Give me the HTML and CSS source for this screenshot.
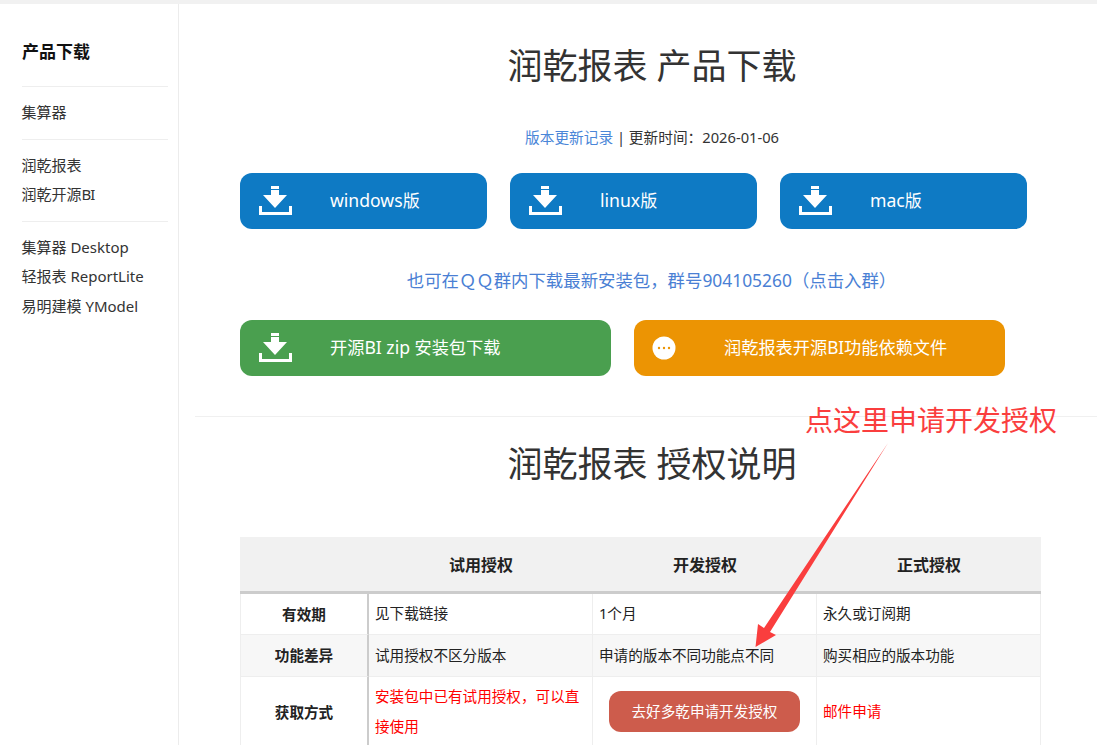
FILE: index.html
```html
<!DOCTYPE html>
<html lang="zh-CN">
<head>
<meta charset="utf-8">
<title>润乾报表 产品下载</title>
<link rel="stylesheet" href="styles.css">
</head>
<body>
<div class="page">
  <aside class="sidebar">
    <div class="side-title">产品下载</div>
    <div class="side-group"><a>集算器</a></div>
    <div class="side-group"><a>润乾报表</a><a>润乾开源<span class="bi">BI</span></a></div>
    <div class="side-group"><a>集算器 Desktop</a><a>轻报表 ReportLite</a><a>易明建模 YModel</a></div>
  </aside>
  <main class="main">
    <h1 class="heading first">润乾报表 产品下载</h1>
    <p class="update"><a class="link">版本更新记录</a> | 更新时间：2026-01-06</p>
    <div class="btn-row">
      <a class="btn blue small">
        <svg class="dl" viewBox="0 0 34 30"><path d="M12 0h8v3h-8zM12 4h8v5h-8zM4 9h24L16 22z" fill="#fff"/><path d="M1.5 20v7.5h30V20" fill="none" stroke="#fff" stroke-width="3"/></svg>
        <span><span class="lat">windows</span>版</span>
      </a>
      <a class="btn blue small">
        <svg class="dl" viewBox="0 0 34 30"><path d="M12 0h8v3h-8zM12 4h8v5h-8zM4 9h24L16 22z" fill="#fff"/><path d="M1.5 20v7.5h30V20" fill="none" stroke="#fff" stroke-width="3"/></svg>
        <span><span class="lat">linux</span>版</span>
      </a>
      <a class="btn blue small">
        <svg class="dl" viewBox="0 0 34 30"><path d="M12 0h8v3h-8zM12 4h8v5h-8zM4 9h24L16 22z" fill="#fff"/><path d="M1.5 20v7.5h30V20" fill="none" stroke="#fff" stroke-width="3"/></svg>
        <span><span class="lat">mac</span>版</span>
      </a>
    </div>
    <p class="qq">也可在ＱＱ群内下载最新安装包，群号904105260（点击入群）</p>
    <div class="btn-row">
      <a class="btn green wide">
        <svg class="dl" viewBox="0 0 34 30"><path d="M12 0h8v3h-8zM12 4h8v5h-8zM4 9h24L16 22z" fill="#fff"/><path d="M1.5 20v7.5h30V20" fill="none" stroke="#fff" stroke-width="3"/></svg>
        <span>开源<span class="lat">BI zip</span> 安装包下载</span>
      </a>
      <a class="btn orange wide">
        <svg class="more" viewBox="0 0 24 24"><circle cx="12" cy="12" r="11.5" fill="#fff"/><circle cx="7" cy="12" r="1.2" fill="#ec9403"/><circle cx="12" cy="12" r="1.2" fill="#ec9403"/><circle cx="17" cy="12" r="1.2" fill="#ec9403"/></svg>
        <span>润乾报表开源BI功能依赖文件</span>
      </a>
    </div>
    <hr class="rule">
    <h1 class="heading second">润乾报表 授权说明</h1>
    <table class="license">
      <thead>
        <tr><th class="c1"></th><th class="c2">试用授权</th><th class="c3">开发授权</th><th class="c4">正式授权</th></tr>
      </thead>
      <tbody>
        <tr class="r1"><th>有效期</th><td>见下载链接</td><td>1个月</td><td>永久或订阅期</td></tr>
        <tr class="r2"><th>功能差异</th><td>试用授权不区分版本</td><td>申请的版本不同功能点不同</td><td>购买相应的版本功能</td></tr>
        <tr class="r3"><th>获取方式</th><td class="red">安装包中已有试用授权，可以直接使用</td><td><a class="apply">去好多乾申请开发授权</a></td><td class="red">邮件申请</td></tr>
      </tbody>
    </table>
  </main>
</div>
<div class="note">点这里申请开发授权</div>
<svg class="arrow" viewBox="0 0 1097 745"><path d="M888 443 770 632l6 3-20.500 12 2.500-23 6 4z" fill="#fa3e3e"/></svg>
</body>
</html>
```

FILE: styles.css
```css
* { box-sizing: border-box; }
html, body { margin: 0; height: 100%; overflow: hidden; background: #fff; }
body {
  font-family: "Noto Sans", "Noto Sans CJK SC", sans-serif;
  color: #333;
  font-size: 15px;
  border-top: 4px solid #f1f1f1;
  position: relative;
}
.page { display: flex; height: 741px; overflow: hidden; }
.sidebar {
  width: 179px;
  flex: none;
  padding: 0 10px 0 22px;
  border-right: 1px solid #ececec;
}
.side-title {
  font-size: 17px;
  font-weight: 700;
  color: #111;
  line-height: 22px;
  padding-top: 37px;
  padding-bottom: 23px;
}
.side-group {
  border-top: 1px solid #eee;
  padding: 11px 0;
  display: flex;
  flex-direction: column;
}
.side-group a { line-height: 29.500px; font-size: 15px; color: #333; margin-left: -0.500px; }
.bi { letter-spacing: -1px; }
.main { flex: 1; padding-left: 28px; min-width: 0; }
.heading {
  font-size: 35px;
  font-weight: 400;
  line-height: 48px;
  margin: 0;
  text-align: center;
  color: #333;
}
.first { padding-top: 38px; }
.update { margin: 37px 0 0; height: 24px; line-height: 21px; text-align: center; font-size: 14.700px; color: #333; }
.link { color: #4a86d8; }
.btn-row { display: flex; gap: 23px; margin-left: 33px; }
.update + .btn-row { margin-top: 22px; }
.btn {
  height: 56px;
  border-radius: 12px;
  display: flex;
  align-items: center;
  color: #fff;
  font-size: 17px;
  position: relative;
  padding-left: 90px;
  padding-bottom: 4px;
}
.lat { font-size: 17.600px; }
.small { width: 247px; }
.wide { width: 371px; font-size: 17.200px; }
.blue { background: #0e7ac4; }
.green { background: #4a9f4f; }
.orange { background: #ec9403; }
.dl { position: absolute; left: 19px; top: 13px; width: 34px; height: 30px; }
.more { position: absolute; left: 18px; top: 16px; width: 24px; height: 24px; }
.qq { margin: 36px 0 25px -1px; height: 30px; line-height: 30px; text-align: center; font-size: 17.400px; color: #4a7fd4; }
.rule { border: 0; border-top: 1px solid #f0f0f0; margin: 40px 0 0 -12px; }
.second { padding-top: 23px; }
.license {
  margin: 49px 0 0 33px;
  width: 801px;
  border-collapse: separate;
  border-spacing: 0;
  table-layout: fixed;
  font-size: 14.600px;
  color: #222;
}
.license thead th {
  height: 57px;
  background: #f1f1f1;
  border-bottom: 3px solid #ccc;
  font-size: 16px;
  color: #222;
  font-weight: 700;
}
.c1 { width: 129px; }
.c2 { width: 224px; }
.c3 { width: 224px; }
.license tbody th {
  font-size: 14.600px;
  font-weight: 700;
  color: #222;
  border-left: 1px solid #eee;
  border-right: 2px solid #ccc;
  border-bottom: 1px solid #eee;
  padding: 0 0 2px;
}
.license td {
  padding: 0 6px 2px;
  border-right: 1px solid #eee;
  border-bottom: 1px solid #eee;
  line-height: 30px;
}
.r1 > * { height: 41px; }
.r2 > * { height: 42px; background: #f7f7f7; }
.r3 > * { height: 71px; }
.license .red { color: #f00; }
.apply {
  display: block;
  width: 191px;
  height: 41px;
  margin: 0 auto;
  border-radius: 12px;
  background: #cd5c4c;
  color: #fff;
  font-size: 14.600px;
  line-height: 41px;
  text-align: center;
}
.note {
  position: absolute;
  left: 805px;
  top: 396px;
  font-size: 28px;
  line-height: 40px;
  color: #fa3e3e;
  white-space: nowrap;
}
.arrow { position: absolute; left: 0; top: -4px; width: 1097px; height: 745px; pointer-events: none; }
```
